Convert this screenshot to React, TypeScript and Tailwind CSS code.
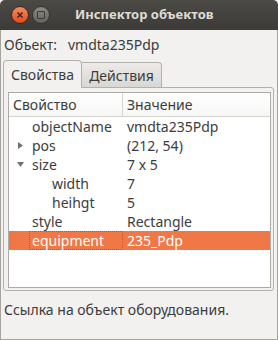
import React from 'react';

type Row = {
  name: string;
  value: string;
  depth: number;
  arrow?: 'right' | 'down';
  selected?: boolean;
};

const rows: Row[] = [
  { name: 'objectName', value: 'vmdta235Pdp', depth: 0 },
  { name: 'pos', value: '(212, 54)', depth: 0, arrow: 'right' },
  { name: 'size', value: '7 x 5', depth: 0, arrow: 'down' },
  { name: 'width', value: '7', depth: 1 },
  { name: 'heihgt', value: '5', depth: 1 },
  { name: 'style', value: 'Rectangle', depth: 0 },
  { name: 'equipment', value: '235_Pdp', depth: 0, selected: true },
];

const Arrow = ({ dir }: { dir: 'right' | 'down' }) => (
  <svg width="9" height="9" viewBox="0 0 9 9" className="absolute left-[7px] top-[5px]">
    {dir === 'right' ? (
      <polygon points="2,1 7,4.5 2,8" fill="#707070" />
    ) : (
      <polygon points="1,2 8,2 4.5,7" fill="#707070" />
    )}
  </svg>
);

export default function App() {
  return (
    <div
      className="w-[278px] h-[340px] flex flex-col bg-[#f2f1f0] text-[14px] text-[#3c3c3c] overflow-hidden"
      style={{ fontFamily: '"Noto Sans", "DejaVu Sans", sans-serif' }}
    >
      {/* title bar */}
      <div className="h-[30px] shrink-0 rounded-t-[5px] bg-gradient-to-b from-[#4b4a45] to-[#3c3b37] flex items-center pl-[11px] gap-[3px]">
        <div className="w-[18px] h-[18px] rounded-full bg-gradient-to-b from-[#f78a5e] to-[#df4a1a] border border-[#3a2a20] flex items-center justify-center">
          <svg width="8" height="8" viewBox="0 0 8 8">
            <path d="M1.5 1.5 L6.5 6.5 M6.5 1.5 L1.5 6.5" stroke="#3b2a22" strokeWidth="1.6" />
          </svg>
        </div>
        <div className="w-[18px] h-[18px] rounded-full bg-gradient-to-b from-[#8a8984] to-[#64635e] border border-[#35342f] flex items-center justify-center">
          <div className="w-[8px] h-[8px] border-[1.5px] border-[#3a3935] rounded-[1px]" />
        </div>
        <div className="ml-[22px] font-bold text-[#dfdbd2] text-[13px]">Инспектор объектов</div>
      </div>

      {/* body */}
      <div className="flex-1 flex flex-col border-x border-b border-[#a6a49f]">
        <div className="pl-[3px] pt-[5px] h-[26px] leading-[20px]">
          Объект:&nbsp;&nbsp;&nbsp;vmdta235Pdp
        </div>

        {/* tabs */}
        <div className="pl-[2px] pr-[3px] flex flex-col">
          <div className="flex items-end h-[31px] relative z-10">
            <div className="h-[28px] w-[79px] border border-b-0 border-[#b3b1ab] rounded-t-[4px] bg-[#f2f1f0] flex items-center justify-center pb-[1px] -mb-px relative">
              Свойства
            </div>
            <div className="h-[25px] w-[80px] border border-l-0 border-b-0 border-[#b3b1ab] rounded-tr-[4px] bg-gradient-to-b from-[#edebe8] to-[#d9d7d3] flex items-center justify-center">
              Действия
            </div>
          </div>

          {/* pane */}
          <div className="h-[204px] border border-[#b3b1ab] rounded-b-[3px] rounded-tr-[3px] pl-[4px] pr-[2px] pt-[4px] pb-[2px]">
            <div className="h-full bg-white border border-[#adaba6] flex flex-col">
              <div className="h-[24px] flex border-b border-[#d6d4d0] bg-gradient-to-b from-white to-[#f7f7f6]">
                <div className="w-[114px] pl-[4px] border-r border-[#d6d4d0] flex items-center">Свойство</div>
                <div className="pl-[4px] flex items-center">Значение</div>
              </div>
              {rows.map((r) => (
                <div
                  key={r.name}
                  className={`h-[19px] flex relative leading-[19px] ${r.selected ? 'bg-[#f07746] text-white' : ''}`}
                >
                  {r.arrow && <Arrow dir={r.arrow} />}
                  <div
                    className={`w-[114px] h-[19px] shrink-0 ${r.depth ? 'pl-[43px]' : 'pl-[23px]'}`}
                  >
                    {r.selected ? (
                      <div className="h-[19px] -ml-[3px] pl-[2px] border border-dotted border-[#8c4a2c]/60 leading-[17px]">
                        {r.name}
                      </div>
                    ) : (
                      r.name
                    )}
                  </div>
                  <div className="pl-[4px]">{r.value}</div>
                </div>
              ))}
            </div>
          </div>
        </div>

        <div className="pl-[3px] pt-[9px] leading-[20px]">Ссылка на объект оборудования.</div>
      </div>
    </div>
  );
}
